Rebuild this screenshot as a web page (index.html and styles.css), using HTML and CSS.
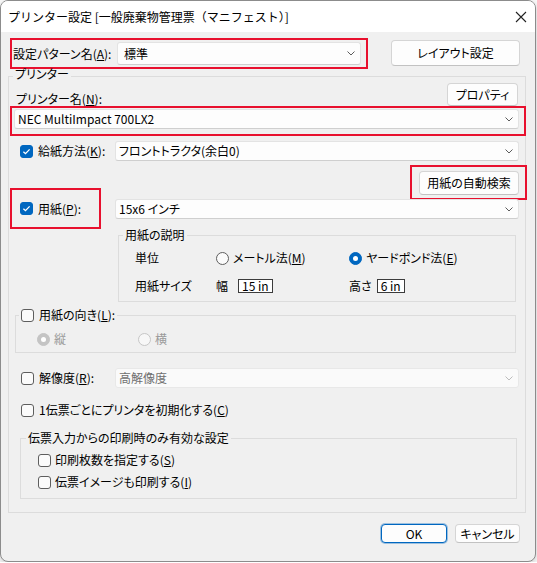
FILE: index.html
```html
<!DOCTYPE html>
<html lang="ja">
<head>
  <meta charset="UTF-8">
  <title>プリンター設定</title>
  <link rel="stylesheet" href="styles.css">
</head>
<body>
  <div class="window">
    <div class="titlebar">
      <span class="title">プリンター設定 [一般廃棄物管理票（マニフェスト）]</span>
      <svg class="close" width="12" height="12" viewBox="0 0 12 12">
        <path d="M1 1 L11 11 M11 1 L1 11" stroke="#222" stroke-width="1.1" fill="none"/>
      </svg>
    </div>

    <div class="content">
      <div class="top-row">
        <div class="mark pattern-mark">
          <span class="label">設定パターン名(<u>A</u>):</span>
          <div class="select pattern-select">
            <span>標準</span>
            <svg class="chevron" width="8" height="5" viewBox="0 0 8 5"><path d="M0.5 0.5 L4 4 L7.5 0.5"/></svg>
          </div>
        </div>
        <button class="btn layout-btn">レイアウト設定</button>
      </div>

      <div class="group printer-group">
        <div class="group-title">プリンター</div>

        <div class="name-row">
          <span class="label">プリンター名(<u>N</u>):</span>
          <button class="btn prop-btn">プロパティ</button>
        </div>

        <div class="mark printer-mark">
          <div class="select printer-select">
            <span>NEC MultiImpact 700LX2</span>
            <svg class="chevron" width="8" height="5" viewBox="0 0 8 5"><path d="M0.5 0.5 L4 4 L7.5 0.5"/></svg>
          </div>
        </div>

        <div class="field-row feed-row">
          <span class="check on"><svg width="13" height="13" viewBox="0 0 13 13"><path d="M3.4 6.7 L5.5 8.7 L9.6 4.4"/></svg></span>
          <span class="label">給紙方法(<u>K</u>):</span>
          <div class="select wide">
            <span>フロントトラクタ(余白0)</span>
            <svg class="chevron" width="8" height="5" viewBox="0 0 8 5"><path d="M0.5 0.5 L4 4 L7.5 0.5"/></svg>
          </div>
        </div>

        <div class="search-row">
          <div class="mark search-mark">
            <button class="btn search-btn">用紙の自動検索</button>
          </div>
        </div>

        <div class="paper-row">
          <div class="mark paper-mark">
            <span class="check on"><svg width="13" height="13" viewBox="0 0 13 13"><path d="M3.4 6.7 L5.5 8.7 L9.6 4.4"/></svg></span>
            <span class="label">用紙(<u>P</u>):</span>
          </div>
          <div class="select wide paper-select">
            <span>15x6 インチ</span>
            <svg class="chevron" width="8" height="5" viewBox="0 0 8 5"><path d="M0.5 0.5 L4 4 L7.5 0.5"/></svg>
          </div>
        </div>

        <div class="group desc-group">
          <div class="group-title">用紙の説明</div>
          <div class="desc-row unit-row">
            <span class="desc-label">単位</span>
            <span class="option col-2"><span class="radio"></span>メートル法(<u>M</u>)</span>
            <span class="option"><span class="radio on"></span>ヤードポンド法(<u>E</u>)</span>
          </div>
          <div class="desc-row size-row">
            <span class="desc-label">用紙サイズ</span>
            <span class="size col-2">幅<span class="size-box width-box">15 in</span></span>
            <span class="size">高さ<span class="size-box height-box">6 in</span></span>
          </div>
        </div>

        <div class="group orient-group">
          <div class="group-title check-title">
            <span class="check"></span>
            <span class="label">用紙の向き(<u>L</u>):</span>
          </div>
          <div class="orient-row">
            <span class="option disabled col-orient"><span class="radio on"></span>縦</span>
            <span class="option disabled"><span class="radio"></span>横</span>
          </div>
        </div>

        <div class="field-row res-row">
          <span class="check"></span>
          <span class="label">解像度(<u>R</u>):</span>
          <div class="select wide disabled">
            <span>高解像度</span>
            <svg class="chevron" width="8" height="5" viewBox="0 0 8 5"><path d="M0.5 0.5 L4 4 L7.5 0.5"/></svg>
          </div>
        </div>

        <div class="field-row init-row">
          <span class="check"></span>
          <span class="label">1伝票ごとにプリンタを初期化する(<u>C</u>)</span>
        </div>

        <div class="group slip-group">
          <div class="group-title">伝票入力からの印刷時のみ有効な設定</div>
          <div class="slip-row">
            <span class="check"></span>
            <span class="label">印刷枚数を指定する(<u>S</u>)</span>
          </div>
          <div class="slip-row">
            <span class="check"></span>
            <span class="label">伝票イメージも印刷する(<u>I</u>)</span>
          </div>
        </div>
      </div>

      <div class="footer">
        <button class="btn ok-btn">OK</button>
        <button class="btn cancel-btn">キャンセル</button>
      </div>
    </div>
  </div>
</body>
</html>
```

FILE: styles.css
```css
:root {
  --face: #f0f0f0;
  --line: #dcdcdc;
  --mark: #e8102e;
  --blue: #0067c0;
  --text: #000;
  --muted: #9a9a9a;
}

* {
  margin: 0;
  padding: 0;
  box-sizing: border-box;
}

body {
  background: #ffffff;
  font-family: "Noto Sans CJK JP", "Noto Sans", sans-serif;
  font-size: 12px;
  line-height: 14px;
  color: var(--text);
  font-feature-settings: "palt";
}

u {
  text-decoration: underline;
  text-underline-offset: 1px;
}

.window {
  width: 536px;
  height: 562px;
  border: 1px solid #8c8c8c;
  border-radius: 8px;
  overflow: hidden;
  background: var(--face);
  box-shadow: 0 2px 8px rgba(0, 0, 0, 0.25);
}

.titlebar {
  height: 31px;
  background: #ffffff;
  display: flex;
  align-items: center;
  padding-left: 7px;
}

.title {
  font-size: 12px;
  font-feature-settings: normal;
}

.close {
  margin-left: auto;
  margin-right: 8px;
}

/* highlight boxes */
.mark {
  border: 2px solid var(--mark);
}

/* common controls */
.label {
  white-space: nowrap;
}

.select {
  display: flex;
  align-items: center;
  justify-content: space-between;
  height: 20px;
  padding: 0 5px 0 3px;
  background: #fdfdfd;
  border: 1px solid #e3e3e3;
  border-bottom-color: #cfcfcf;
  border-radius: 3px;
  white-space: nowrap;
}

.select.disabled {
  background: #fafafa;
  border-color: #e8e8e8;
  color: #6f6f6f;
}

.chevron path {
  fill: none;
  stroke: #5c5c5c;
  stroke-width: 1;
}

.select.disabled .chevron path {
  stroke: #bcbcbc;
}

.btn {
  font: inherit;
  font-feature-settings: "palt";
  color: var(--text);
  background: #fdfdfd;
  border: 1px solid #d5d5d5;
  border-bottom-color: #c2c2c2;
  border-radius: 4px;
  cursor: pointer;
}

.check {
  flex: none;
  width: 13px;
  height: 13px;
  border: 1px solid #5e5e5e;
  border-radius: 3px;
  background: #fbfbfb;
  display: inline-block;
}

.check.on {
  background: var(--blue);
  border-color: var(--blue);
}

.check svg {
  display: block;
  margin: -1px;
}

.check svg path {
  fill: none;
  stroke: #ffffff;
  stroke-width: 1.3;
}

.radio {
  flex: none;
  width: 13px;
  height: 13px;
  border: 1px solid #5e5e5e;
  border-radius: 50%;
  background: #fbfbfb;
  display: inline-flex;
  align-items: center;
  justify-content: center;
  margin-right: 4px;
}

.radio.on {
  background: var(--blue);
  border-color: var(--blue);
}

.radio.on::after {
  content: "";
  width: 5px;
  height: 5px;
  border-radius: 50%;
  background: #ffffff;
}

.option {
  display: inline-flex;
  align-items: center;
  white-space: nowrap;
}

.option.disabled {
  color: var(--muted);
}

.option.disabled .radio {
  border-color: #c6c6c6;
  background: #f7f7f7;
}

.option.disabled .radio.on {
  background: #c4c4c4;
  border-color: #c4c4c4;
}

/* group boxes */
.group {
  border: 1px solid var(--line);
}

.group-title {
  width: fit-content;
  height: 14px;
  margin-top: -8px;
  padding: 0 2px;
  background: var(--face);
  white-space: nowrap;
}

/* top row */
.top-row {
  display: flex;
  align-items: flex-start;
  margin-top: 6px;
}

.pattern-mark {
  display: flex;
  align-items: center;
  width: 358px;
  height: 31px;
  margin-left: 9px;
  padding-left: 1px;
}

.pattern-select {
  width: 244px;
  height: 23px;
  margin-left: auto;
  margin-right: 5px;
  padding-left: 6px;
}

.layout-btn {
  width: 129px;
  height: 26px;
  margin: 2px 15px 0 auto;
}

/* printer group */
.printer-group {
  width: 518px;
  margin: 7px 0 0 7px;
  padding-bottom: 13px;
}

.printer-group > .group-title {
  margin-top: -10px;
  margin-left: 4px;
}

.name-row {
  display: flex;
  align-items: flex-end;
  margin-top: 2px;
  padding-left: 7px;
}

.prop-btn {
  width: 71px;
  height: 23px;
  margin: 0 7px 0 auto;
}

.printer-mark {
  width: 516px;
  height: 30px;
  margin-left: 1px;
  padding: 1px 0 0 2px;
}

.printer-select {
  width: 505px;
  padding-left: 3px;
}

.field-row {
  display: flex;
  align-items: center;
  gap: 5px;
  padding-left: 11px;
}

.select.wide {
  width: 404px;
  margin-left: auto;
  margin-right: 6px;
}

.feed-row {
  margin-top: 5px;
}

.search-row {
  display: flex;
  justify-content: flex-end;
  margin-top: 4px;
  margin-right: -2px;
}

.search-mark {
  width: 117px;
  height: 35px;
  padding: 4px 0 0 7px;
}

.search-btn {
  width: 100px;
  height: 24px;
}

.paper-row {
  display: flex;
  align-items: flex-start;
  margin-top: -12px;
}

.paper-mark {
  display: flex;
  align-items: center;
  gap: 5px;
  width: 91px;
  height: 41px;
  margin-left: 1px;
  padding-left: 8px;
}

.paper-select {
  margin-top: 11px;
}

/* paper description */
.desc-group {
  width: 398px;
  margin: 6px 0 0 109px;
  padding: 0 0 5px 16px;
}

.desc-group > .group-title {
  margin-left: -12px;
}

.desc-row {
  display: flex;
  align-items: center;
  height: 20px;
}

.unit-row {
  margin-top: 6px;
}

.size-row {
  margin-top: 8px;
}

.desc-label {
  width: 81px;
}

.col-2 {
  width: 133px;
}

.size {
  display: inline-flex;
  align-items: center;
  white-space: nowrap;
}

.size-box {
  display: inline-block;
  height: 14px;
  line-height: 12px;
  padding: 0 3px;
  border: 1px solid #3c3c3c;
  background: #ffffff;
  white-space: nowrap;
  font-feature-settings: normal;
}

.width-box {
  margin-left: 10px;
}

.height-box {
  margin-left: 5px;
}

/* orientation */
.orient-group {
  width: 501px;
  margin: 13px 0 0 6px;
  padding: 0 0 3px 21px;
}

.check-title {
  display: flex;
  align-items: center;
  gap: 5px;
  margin-left: -18px;
}

.orient-row {
  display: flex;
  align-items: center;
  height: 20px;
  margin-top: 7px;
}

.col-orient {
  width: 101px;
}

/* resolution / init */
.res-row {
  margin-top: 15px;
  padding-left: 12px;
}

.init-row {
  margin-top: 15px;
  padding-left: 12px;
}

/* slip group */
.slip-group {
  width: 497px;
  margin: 21px 0 0 11px;
  padding: 0 0 9px 17px;
}

.slip-group > .group-title {
  margin-left: -12px;
}

.slip-row {
  display: flex;
  align-items: center;
  gap: 4px;
  height: 14px;
  margin-top: 8px;
}

/* footer */
.footer {
  display: flex;
  justify-content: flex-end;
  gap: 8px;
  margin-top: 11px;
  padding-right: 15px;
}

.ok-btn {
  width: 66px;
  height: 19px;
  border: 1px solid var(--blue);
  box-shadow: 0 0 0 1px rgba(0, 103, 192, 0.35);
}

.cancel-btn {
  width: 65px;
  height: 19px;
}
```
